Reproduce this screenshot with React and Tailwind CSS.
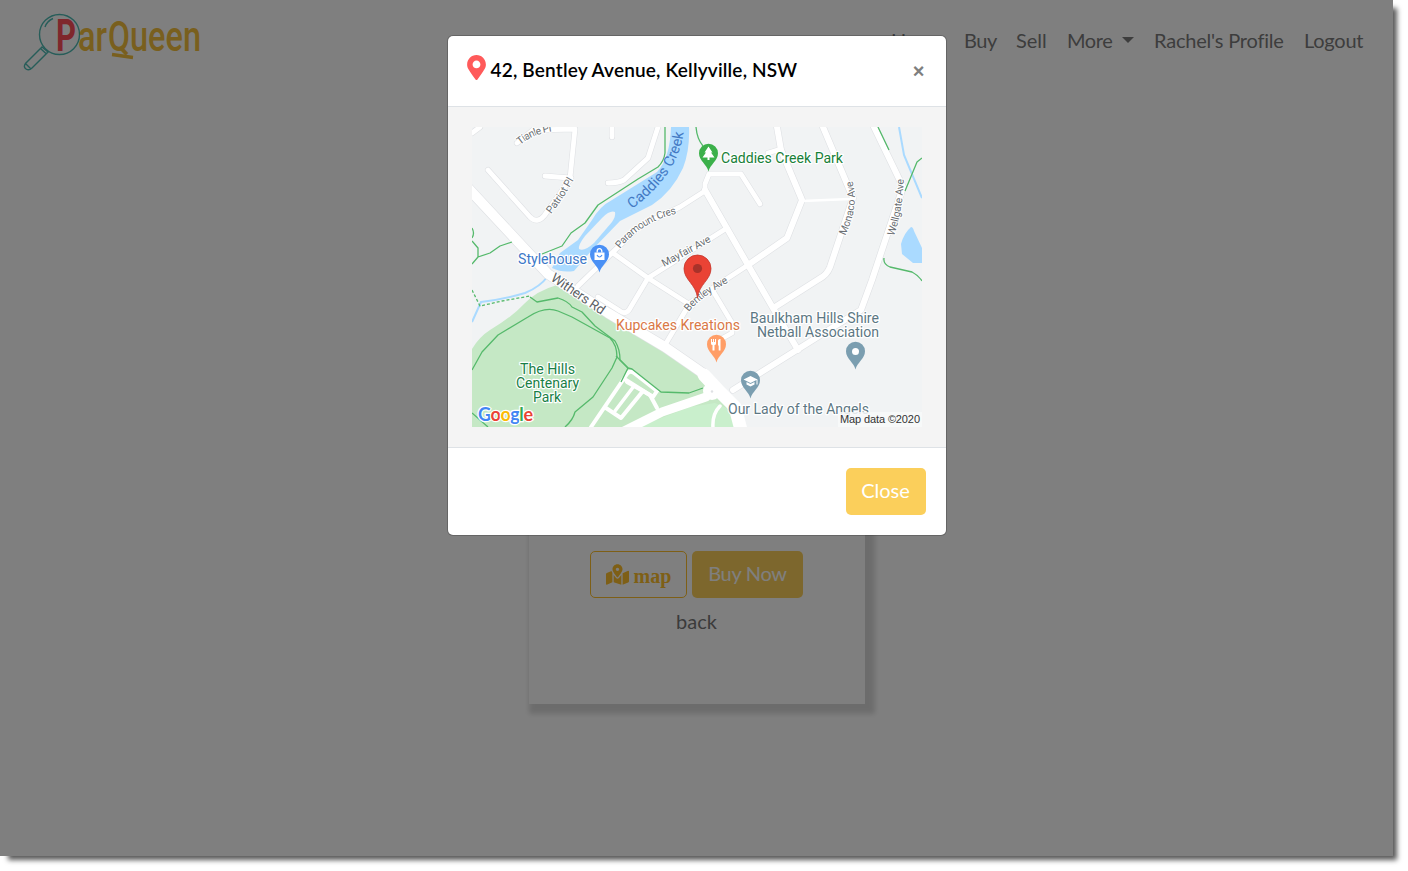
import React from "react";
import { FaMapMarkerAlt, FaMapMarkedAlt } from "react-icons/fa";

const minorRoads = [
  "M472 133 L480 127",
  "M517 143 L533 130 L575 129 L570 178 L545 176",
  "M488 170 L530 217 Q537 224 544 216 L571 178",
  "M612 127 V137",
  "M658 127 L648 158 L624 180 Q618 183 608 183",
  "M705 191 L680 207 L640 226 L613 252 L578 286",
  "M613 253 L648 278 L692 306",
  "M727 228 L648 278 L629 310 Q625 315 620 311 L598 297",
  "M665 345 L690 303 L748 265",
  "M705 191 V184 L709 174 H741 L760 204",
  "M713 291 L732 323 V333 L723 338",
  "M768 153 L781 149",
];

const majorRoads = [
  "M705 190 L748 265 L773 308 L798 350",
  "M777 127 L781 150 L802 200 L787 238 L748 265",
  "M823 127 L853 198 L830 267 Q827 275 819 279 L775 307",
  "M874 127 L903 187 L872 280 L861 310 L835 326 L733 390",
];

function MapPin({ x, y, color, children }) {
  return (
    <g transform={`translate(${x} ${y})`}>
      <path
        d="M0 16 C-1.5 9 -9.5 5.5 -9.5 -2.2 A9.5 9.5 0 0 1 9.5 -2.2 C9.5 5.5 1.5 9 0 16Z"
        fill={color}
      />
      {children}
    </g>
  );
}

function Label({ x, y, fill, width, children }) {
  return (
    <text
      x={x}
      y={y}
      fill={fill}
      fontSize="14"
      textLength={width}
      lengthAdjust="spacingAndGlyphs"
      stroke="#fff"
      strokeWidth="2.4"
      strokeLinejoin="round"
      paintOrder="stroke"
    >
      {children}
    </text>
  );
}

function StreetLabel({ path, width, size = 10.5, id, color = "#6b7074", children }) {
  return (
    <>
      <path id={id} d={path} fill="none" />
      <text
        fontSize={size}
        fill={color}
        stroke="#fff"
        strokeWidth="2"
        strokeLinejoin="round"
        paintOrder="stroke"
      >
        <textPath href={`#${id}`} textLength={width}>
          {children}
        </textPath>
      </text>
    </>
  );
}

function StreetMap() {
  return (
    <svg
      className="block h-[300px] w-[450px] font-['Roboto',sans-serif]"
      viewBox="472 127 450 300"
    >
      <rect x="472" y="127" width="450" height="300" fill="#f1f3f4" />
      <path
        d="M472 349 Q479 337 490 330 Q512 317 524 304 Q536 291 557 285 L592 306 L660 339 L690 361 Q704 372 708 385 L735 405 L737 427 H472Z"
        fill="#c5e8c5"
      />
      <path d="M638 427 L690 407 L715 403 L735 412 L740 427Z" fill="#c9efcc" />

      <path
        d="M671 127 Q670 158 657 172 L612 200 Q600 206 592 220 L578 240 L560 253 L552 268 Q562 273 574 271 L592 250 L620 221 L652 205 Q672 192 683 168 Q690 150 689 127Z"
        fill="#aadaff"
      />
      <path
        d="M615 212 Q616 216 612 222 L594 243 Q584 252 579 249 Q578 245 585 236 L602 218 Q610 210 615 212Z"
        fill="#f1f3f4"
      />
      <path
        d="M911 227 Q904 233 901 244 L902 254 L913 263 H922 V248 L914 231 Q913 227 911 227Z"
        fill="#aadaff"
      />
      <g fill="none" stroke="#aadaff" strokeWidth="2">
        <path d="M899 127 L904 155 L922 198" />
        <path d="M472 322 L481 302 Q505 299 525 293 Q540 287 548 276" />
      </g>

      <g fill="none" strokeLinejoin="round" strokeLinecap="round">
        <g stroke="#dfe1e4" strokeWidth="6">
          {minorRoads.map((d) => (
            <path key={d} d={d} />
          ))}
        </g>
        <g stroke="#dfe1e4" strokeWidth="7.2">
          {majorRoads.map((d) => (
            <path key={d} d={d} />
          ))}
        </g>
        <path
          d="M468 188 L548 274 L608 313 L665 347 L704 374"
          stroke="#dfe1e4"
          strokeWidth="11"
        />
        <path d="M802 201 L850 199" stroke="#fff" strokeWidth="2.5" />
        <g stroke="#fff" strokeWidth="4.8">
          {minorRoads.map((d) => (
            <path key={d} d={d} />
          ))}
        </g>
        <g stroke="#fff" strokeWidth="6">
          {majorRoads.map((d) => (
            <path key={d} d={d} />
          ))}
        </g>
        <path
          d="M468 188 L548 274 L608 313 L665 347 L704 374"
          stroke="#fff"
          strokeWidth="9.8"
        />
        <path
          d="M704 375 L718 390 L735 407 L741 430"
          stroke="#fff"
          strokeWidth="13"
        />
        <circle cx="712" cy="391" r="9" fill="#fff" />
        <path d="M622 432 L662 412 L706 397" stroke="#fff" strokeWidth="9" />
        <path d="M720 406 Q712 414 713 428" stroke="#fff" strokeWidth="3.5" />
        <circle cx="712" cy="391.500" r="1.200" fill="#dfe1e4" />
        <g stroke="#fff" strokeWidth="4">
          <path d="M591 427 L627 374 Q630 370 634 373 L657 391 L653 397 L626 380" />
          <path d="M643 391 L650 395 L657 408" />
          <path d="M634 386 L615 411" strokeWidth="3.500" />
          <path d="M606 408 L621 418 L643 391 L627 382" />
        </g>
      </g>

      <g fill="none" stroke="#55b96b" strokeWidth="1.300" strokeLinejoin="round">
        <path d="M665 127 V153 Q664 161 658 167 L638 179 L598 205 L585 223 L571 233 L562 246 L542 254" />
        <path d="M472 228 Q475 233 472 238 M472 241 L478 248 V257 L472 264 M478 257 L490 253 L500 246 L512 242" />
        <path d="M696 127 Q697 139 703 146" />
        <path d="M878 127 L889 150 M905 191 L917 162 L922 158" />
        <path d="M884 258 Q883 264 890 267 L912 272 Q918 275 922 281" />
        <path d="M472 370 L482 352 L498 335 L528 317 Q545 306 558 311 L572 317 L610 338 Q617 345 617 357 L612 368 L593 397 L575 412 Q573 420 565 427" />
        <path d="M530 297 L537 302 L558 298 Q568 301 572 307 L582 312 L595 326 L615 341 Q620 349 620 360 L628 368 L632 369 L661 392 L689 393 L703 388" />
        <path d="M616 356 L628 368 L621 382" />
        <path d="M472 413 L488 427" />
        <path d="M472 290 L480 306 L502 301 L530 296" strokeDasharray="3 2" />
      </g>

      <StreetLabel id="tianle" path="M520 145 Q534 133 556 131" width="35">
        Tianle Pl
      </StreetLabel>
      <StreetLabel id="patriot" path="M551 214 Q562 201 575 178" width="41">
        Patriot Pl
      </StreetLabel>
      <StreetLabel id="paramount" path="M620 249 Q642 221 679 213" width="68">
        Paramount Cres
      </StreetLabel>
      <StreetLabel id="mayfair" path="M664 267 L714 240" width="54">
        Mayfair Ave
      </StreetLabel>
      <StreetLabel id="bentley" path="M689 312 Q700 297 731 281" width="50">
        Bentley Ave
      </StreetLabel>
      <StreetLabel id="monaco" path="M845 236 Q861 203 851 177" width="57">
        Monaco Ave
      </StreetLabel>
      <StreetLabel id="wellgate" path="M894 236 Q903 211 904 174" width="58">
        Wellgate Ave
      </StreetLabel>
      <StreetLabel
        id="withers"
        path="M550 280 L610 321"
        width="62"
        size={13.5}
        color="#5c6165"
      >
        Withers Rd
      </StreetLabel>
      <path id="creek" d="M632 209 Q682 172 684 126" fill="none" />
      <text fontSize="14.500" fill="#4279c4">
        <textPath href="#creek" textLength="95">
          Caddies Creek
        </textPath>
      </text>

      <Label x={721} y={163} fill="#188038" width={122}>
        Caddies Creek Park
      </Label>
      <Label x={518} y={264} fill="#3c78c8" width={69}>
        Stylehouse
      </Label>
      <Label x={616} y={330} fill="#d97846" width={124}>
        Kupcakes Kreations
      </Label>
      <Label x={750} y={323} fill="#5c7783" width={129}>
        Baulkham Hills Shire
      </Label>
      <Label x={757} y={337} fill="#5c7783" width={122}>
        Netball Association
      </Label>
      <Label x={520} y={374} fill="#188046" width={55}>
        The Hills
      </Label>
      <Label x={516} y={388} fill="#188046" width={63}>
        Centenary
      </Label>
      <Label x={533} y={402} fill="#188046" width={28}>
        Park
      </Label>
      <Label x={728} y={414} fill="#5c7783" width={141}>
        Our Lady of the Angels
      </Label>

      <MapPin x={708.5} y={155.5} color="#3bb04a">
        <path
          d="M0 -9 L4 -3 H2.500 L6 2 H1 V4.500 H-1 V2 H-6 L-2.500 -3 H-4Z"
          fill="#fff"
        />
      </MapPin>
      <MapPin x={599.5} y={256.5} color="#4a90f5">
        <path d="M-5 -4 H5 V3.500 H-5Z" fill="#fff" />
        <path
          d="M-2.300 -4 V-5.500 A2.300 2.300 0 0 1 2.300 -5.500 V-4"
          fill="none"
          stroke="#fff"
          strokeWidth="1.300"
        />
        <path
          d="M-2.500 -1.500 Q0 2.500 2.500 -1.500"
          fill="none"
          stroke="#4a90f5"
          strokeWidth="1.200"
        />
      </MapPin>
      <MapPin x={716.5} y={346.5} color="#ff9e67">
        <path
          d="M-5.500 -7.500 V-3 Q-5.500 -1.500 -4 -1.500 V4 H-2 V-1.500 Q-0.500 -1.500 -0.500 -3 V-7.500 H-1.500 V-4.500 H-2.500 V-7.500 H-3.500 V-4.500 H-4.500 V-7.500Z M1.500 -6 Q2 -8 4 -7.500 V4 H2.200 V-1 H1.500Z"
          fill="#fff"
        />
      </MapPin>
      <MapPin x={855.5} y={353.5} color="#7b9eb0">
        <circle cy="-2" r="3.500" fill="#fff" />
      </MapPin>
      <MapPin x={750.5} y={382.5} color="#7b9eb0">
        <path
          d="M-7 -3 L0 -6.500 L7 -3 V2 H6 V-2.500 L0 0.500Z M-4 -0.500 L0 1.500 L4 -0.500 V2 L0 4 L-4 2Z"
          fill="#fff"
        />
      </MapPin>

      <path
        d="M697.500 298 C696 284 684 280 684 268.500 A13.500 13.500 0 0 1 711 268.500 C711 280 699 284 697.500 298Z"
        fill="#ea4335"
        stroke="#c5352b"
        strokeWidth=".8"
      />
      <circle cx="697.500" cy="268.500" r="4.600" fill="#a8322a" />

      <text
        x="478"
        y="421"
        fontSize="18"
        fontWeight="400"
        textLength="55"
        stroke="#fff"
        strokeWidth="2.500"
        paintOrder="stroke"
        className="font-['Lato',sans-serif] font-bold"
      >
        <tspan fill="#4285f4">G</tspan>
        <tspan fill="#ea4335">o</tspan>
        <tspan fill="#fbbc04">o</tspan>
        <tspan fill="#4285f4">g</tspan>
        <tspan fill="#34a853">l</tspan>
        <tspan fill="#ea4335">e</tspan>
      </text>
      <rect x="838" y="412" width="84" height="15" fill="#f8f9f9" fillOpacity=".85" />
      <text
        x="840"
        y="423"
        fontSize="11"
        textLength="80"
        fill="#333"
        className="font-['Liberation_Sans',sans-serif]"
      >
        Map data ©2020
      </text>
    </svg>
  );
}

function Logo() {
  return (
    <svg className="h-[76px] w-[210px] shrink-0" viewBox="0 0 210 76">
      <g fill="none" stroke="#4fbab3" strokeWidth="1.400">
        <circle cx="59.500" cy="34.500" r="20" />
        <path d="M45 27 Q47 21 53 18.500" />
        <path d="M42 47 L25.500 63.500 Q23 67 26 69 Q29 71 32 68 L48 52Z M40.500 48.500 L46.500 54 M26 64 L31 69" />
      </g>
      <g className="font-['Roboto',sans-serif]" fontWeight="500">
        <text
          x="56"
          y="51"
          fontSize="44"
          fontWeight="700"
          fill="#ff4f59"
          textLength="20"
          lengthAdjust="spacingAndGlyphs"
        >
          P
        </text>
        <g fill="#f3bf3d" lengthAdjust="spacingAndGlyphs">
          <text x="78" y="51" fontSize="43" textLength="29" lengthAdjust="spacingAndGlyphs">
            ar
          </text>
          <text x="108" y="51" fontSize="43" textLength="22" lengthAdjust="spacingAndGlyphs">
            Q
          </text>
          <text x="130" y="51" fontSize="43" textLength="71" lengthAdjust="spacingAndGlyphs">
            ueen
          </text>
        </g>
        <path d="M112 54.500 L133 57.500" stroke="#f3bf3d" strokeWidth="3.500" />
      </g>
    </svg>
  );
}

function Navbar() {
  return (
    <header className="flex h-[83px] items-start justify-between pr-[30px]">
      <Logo />
      <nav className="mt-[25px] flex gap-5 text-[20px] leading-[30px] tracking-[-0.4px] whitespace-nowrap text-[#7a7a7a]">
        <a className="w-[53px]">Home</a>
        <a className="w-8">Buy</a>
        <a className="w-[31px] tracking-normal">Sell</a>
        <a className="flex w-[67px] items-center justify-between">
          More
          <span className="border-x-6 border-t-6 border-x-transparent" />
        </a>
        <a className="w-[130px] tracking-[-0.2px]">Rachel&apos;s Profile</a>
        <a className="w-[59px] tracking-[-0.25px]">Logout</a>
      </nav>
    </header>
  );
}

function ListingCard() {
  return (
    <section className="mx-auto flex h-[621px] w-[336px] flex-col items-center justify-end bg-white pb-[68px] shadow-[5px_5px_5px_5px_rgba(0,0,0,0.15)]">
      <div className="flex gap-[5px]">
        <button className="flex h-[47px] w-[97px] items-center justify-center gap-[5px] rounded-[5px] border border-[#fdbf2d] text-[#fdbf2d]">
          <FaMapMarkedAlt className="h-[21px] w-[23px]" />
          <span className="pt-[2px] font-['Liberation_Serif',serif] text-[20px] leading-6 font-bold">
            map
          </span>
        </button>
        <button className="h-[47px] w-[111px] rounded-[5px] bg-[#fbcf5b] pb-[3px] text-[20px] tracking-[-0.3px] text-white">
          Buy Now
        </button>
      </div>
      <a className="mt-2 text-[20px] leading-[30px] text-[#777]">back</a>
    </section>
  );
}

function MapDialog() {
  return (
    <div
      role="dialog"
      className="w-[498px] overflow-hidden rounded-[5px] bg-white shadow-[0_0_0_1px_rgba(0,0,0,0.2)]"
    >
      <div className="flex h-[71px] items-center justify-between border-b border-[#dee2e6] pr-[21px] pl-[19px]">
        <h5 className="flex items-center gap-[5px] text-[19px] font-semibold text-black">
          <FaMapMarkerAlt className="-mt-2 h-[25px] w-[19px] text-[#ff5a5a]" />
          <span className="-mt-px tracking-[0.18px] whitespace-nowrap">
            42, Bentley Avenue, Kellyville, NSW
          </span>
        </h5>
        <button className="font-['Liberation_Sans',sans-serif] text-[20px] leading-none font-bold text-[#7f7f7f]">
          ×
        </button>
      </div>
      <div className="bg-[#f4f4f4] px-6 py-5">
        <StreetMap />
      </div>
      <div className="flex h-[88px] justify-end border-t border-[#dee2e6] px-5 pt-5">
        <button className="h-[47px] w-20 rounded-[5px] bg-[#fbcf5b] pb-[3px] text-[20px] text-white">
          Close
        </button>
      </div>
    </div>
  );
}

export default function App() {
  return (
    <div className="h-[871px] w-[1408px] overflow-hidden bg-white font-['Lato',sans-serif]">
      <div className="relative h-[856px] w-[1393px] bg-white shadow-[6px_6px_5px_-2px_rgba(0,0,0,0.65)]">
        <Navbar />
        <ListingCard />
        <div className="absolute inset-0 flex items-start justify-center bg-black/50 pt-9">
          <MapDialog />
        </div>
      </div>
    </div>
  );
}
